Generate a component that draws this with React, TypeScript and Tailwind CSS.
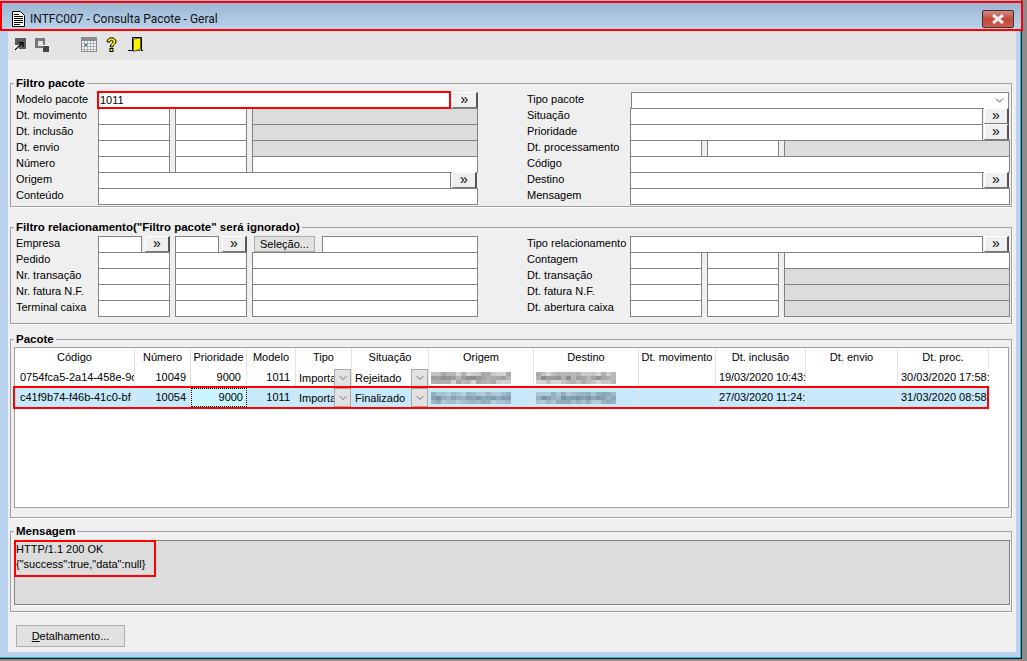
import type { ReactNode } from 'react'
import { ChevronDown } from 'lucide-react'

const Box = ({ w, gray, children }: { w: string; gray?: boolean; children?: ReactNode }) => (
  <div
    className={`h-[17px] shrink-0 overflow-hidden whitespace-nowrap border border-[#828282] pl-[2px] leading-[15px] ${w} ${
      gray ? 'bg-[#dcdcdc]' : 'bg-white'
    }`}
  >
    {children}
  </div>
)

const Dots = ({ w = 'w-[25px]' }: { w?: string }) => (
  <div className={`flex h-[16px] shrink-0 items-center justify-center border-t border-l border-t-white border-l-white border-r-2 border-b border-r-[#555] border-b-[#777] bg-[#efefef] pb-[2px] text-[14px] leading-none ${w}`}>
    »
  </div>
)

const Row = ({ label, right, children }: { label: string; right?: boolean; children?: ReactNode }) => (
  <div className="flex h-4">
    <div className={`shrink-0 leading-[15px] ${right ? 'w-[103px]' : 'w-[82px]'}`}>{label}</div>
    {children}
  </div>
)

const Triple = ({ gray }: { gray?: boolean }) => (
  <div className="flex gap-[5px]">
    <Box w="w-[72px]" />
    <Box w="w-[72px]" />
    <Box w="w-[226px]" gray={gray} />
  </div>
)

const Lookup = ({ w, children }: { w: string; children?: ReactNode }) => (
  <div className="flex gap-[1px]">
    <Box w={w}>{children}</Box>
    <Dots />
  </div>
)

const Group = ({ title, className, children }: { title: string; className: string; children: ReactNode }) => (
  <div className={`relative ml-[2px] w-[1002px] border border-[#a0a0a0] shadow-[1px_1px_0_#fff] ${className}`}>
    <div className="absolute -top-[8px] left-[3px] bg-[#efefef] px-[2px] text-[11.5px] font-bold leading-[14px]">{title}</div>
    {children}
  </div>
)

const Blur = ({ seed, tint, w }: { seed: number; tint: boolean; w: number }) => {
  const cells = []
  for (let y = 0; y < 3; y++) {
    for (let x = 0; x < Math.floor(w / 5); x++) {
      const n = Math.abs(Math.sin(seed + x * 12.9 + y * 78.2) * 43758.5) % 1
      const edge = y === 1 ? 0 : 0.35
      const v = Math.min(1, n * 0.55 + edge)
      const c = tint
        ? `rgb(${115 + v * 75},${145 + v * 70},${160 + v * 70})`
        : `rgb(${135 + v * 90},${135 + v * 90},${135 + v * 90})`
      cells.push(<rect key={`${x}-${y}`} x={x * 5} y={y * 4} width={5} height={4} fill={c} />)
    }
  }
  return (
    <svg width={w} height={12} className="block">
      {cells}
    </svg>
  )
}

const COLS = 'grid grid-cols-[120px_56px_56px_49px_56px_77px_105px_105px_77px_90px_92px_91px]'
const CELL = 'overflow-hidden whitespace-nowrap border-r border-[#e3e3e3]'

const Combo = ({ text }: { text: string }) => (
  <div className={`${CELL} flex items-center pl-[3px]`}>
    <span className="flex-1 overflow-hidden pt-[1px]">{text}</span>
    <span className="flex h-[19px] w-[17px] shrink-0 items-center justify-center border border-[#a8a8a8] bg-[#e1e1e1]">
      <ChevronDown size={12} strokeWidth={1.5} color="#444" />
    </span>
  </div>
)

const DataRow = ({ selected, code, num, situ, inc, proc }: { selected?: boolean; code: string; num: string; situ: string; inc: string; proc: string }) => (
  <div className={`${COLS} ${selected ? 'h-[19px] w-[972px] overflow-hidden bg-[#c6eafb] outline-2 outline-[#f00]' : 'h-5 w-[974px]'}`}>
    <div className={`${CELL} pl-[5px] leading-[19px]`}>{code}</div>
    <div className={`${CELL} pr-[4px] text-right leading-[19px]`}>{num}</div>
    {selected ? (
      <div className="overflow-hidden border border-dotted border-black bg-[#c8f5ff] pr-[3px] text-right leading-[17px]">9000</div>
    ) : (
      <div className={`${CELL} pr-[5px] text-right leading-[19px]`}>9000</div>
    )}
    <div className={`${CELL} pr-[5px] text-right leading-[19px]`}>1011</div>
    <Combo text="Importa" />
    <Combo text={situ} />
    <div className={`${CELL} flex items-center pl-[2px]`}>
      <Blur seed={selected ? 3 : 1} tint={!!selected} w={84} />
    </div>
    <div className={`${CELL} flex items-center pl-[2px]`}>
      <Blur seed={selected ? 7 : 5} tint={!!selected} w={84} />
    </div>
    <div className={CELL} />
    <div className={`${CELL} pl-[3px] leading-[19px] tracking-[-0.1px]`}>{inc}</div>
    <div className={CELL} />
    <div className="overflow-hidden whitespace-nowrap pl-[3px] leading-[19px]">{proc}</div>
  </div>
)

const HEADERS = ['Código', 'Número', 'Prioridade', 'Modelo', 'Tipo', 'Situação', 'Origem', 'Destino', 'Dt. movimento', 'Dt. inclusão', 'Dt. envio', 'Dt. proc.']

export default function App() {
  return (
    <div className="h-[661px] w-[1027px] overflow-hidden bg-[#8c8c8c] font-['Liberation_Sans',sans-serif] text-[11px] text-black">
      <div className="flex h-[659px] w-[1022px] flex-col border-r border-b border-[#1a1a1a] bg-[#9db6d3] pt-px">
        {/* title bar */}
        <div className="flex h-[30px] w-[1023px] shrink-0 items-center border-2 border-[#f00] bg-gradient-to-b from-[#9cb5d2] to-[#bbd4ed] pl-[10px] pt-[5px]">
          <svg width="13" height="16" viewBox="0 0 13 16" className="shrink-0">
            <path d="M.5.5h8l4 4v11H.5z" fill="#fff" stroke="#000" />
            <path d="M2 3.5h5M2 5.5h9M2 7.5h9M2 9.5h9M2 11.5h9M2 13.5h6" stroke="#000" />
          </svg>
          <span className="ml-[5px] font-['Roboto',sans-serif] text-[12px] text-[#111]">INTFC007 - Consulta Pacote - Geral</span>
          <div className="ml-auto mr-[7px] flex h-[18px] w-[32px] items-center justify-center rounded-[2px] border border-[#4a2a2a] bg-gradient-to-b from-[#d08a80] via-[#c0473a] to-[#c8604f]">
            <svg width="14" height="10" viewBox="0 0 14 10">
              <path d="M2 1l10 8M12 1L2 9" stroke="#eee" strokeWidth="3" />
            </svg>
          </div>
        </div>

        {/* window frame */}
        <div className="flex min-h-0 flex-1 flex-col border-r border-b border-[#2fb4d8] bg-[#b9d3ee] pl-[8px] pr-[4px] pb-[5px]">
          {/* toolbar */}
          <div className="flex h-[29px] shrink-0 items-center bg-[#e4e4e4] pb-[2px] pl-[6px]">
            <svg width="12" height="13" viewBox="0 0 12 13" className="shrink-0">
              <rect x="1" y="0" width="11" height="11" fill="#5a5a5a" />
              <rect x="0" y="7" width="5" height="6" fill="#fff" />
              <path d="M1 12l7-7M4.5 4.5H9V9" stroke="#000" strokeWidth="1.2" fill="none" />
            </svg>
            <svg width="15" height="14" viewBox="0 0 15 14" className="ml-[9px] shrink-0">
              <rect x="0" y="0" width="10" height="10" fill="#777" />
              <rect x="3" y="3" width="5" height="5" fill="#e4e4e4" />
              <rect x="8" y="8" width="6" height="6" fill="#444" />
              <rect x="7" y="7" width="7" height="1" fill="#fff" />
            </svg>
            <svg width="16" height="15" viewBox="0 0 16 15" className="ml-[31px] shrink-0">
              <rect width="16" height="15" fill="#8a8a8a" />
              <rect x="1" y="4" width="14" height="10" fill="#f4f4f4" />
              <path d="M3.5 4v10M6.5 4v10M9.5 4v10M12.5 4v10M1 6.5h14M1 9.5h14M1 12.5h14" stroke="#b0b0b0" />
              <rect x="4" y="7" width="2" height="2" fill="#2a7fb8" />
            </svg>
            <svg width="11" height="15" viewBox="0 0 11 15" className="ml-[9px] shrink-0">
              <path d="M1 5C1 2.5 3.2.7 5.5.7S10 2.5 10 4.8c0 2.4-3 2.7-3 5H4.2c0-3 2.8-3.4 2.8-5 0-.9-.6-1.5-1.5-1.5S4 3.9 4 5z" fill="#ffe600" stroke="#000" />
              <rect x="4" y="11.5" width="3" height="3" fill="#ffe600" stroke="#000" />
            </svg>
            <svg width="15" height="15" viewBox="0 0 15 15" className="ml-[11px] shrink-0">
              <path d="M0 13.5h15" stroke="#000" />
              <path d="M4.5 13.5V.5h9v13" fill="#e4e4e4" stroke="#000" />
              <path d="M5.5 2L12.5 1v11L5.5 14.5z" fill="#fff000" stroke="#000" strokeWidth=".6" />
            </svg>
          </div>

          {/* content */}
          <div className="flex min-h-0 flex-1 flex-col bg-[#efefef]">
            <Group title="Filtro pacote" className="mt-[23px] h-[124px]">
              <div className="flex gap-[49px] pl-[5px] pt-[8px]">
                <div className="w-[462px]">
                  <Row label="Modelo pacote">
                    <div className="relative z-10 -ml-[1px] -mt-[1px] flex items-start gap-[1px]">
                      <div className="h-[18px] w-[354px] shrink-0 border-2 border-[#f00] bg-white pl-[1px] leading-[15px]">1011</div>
                      <div className="mt-px"><Dots w="w-[26px]" /></div>
                    </div>
                  </Row>
                  <Row label="Dt. movimento"><Triple gray /></Row>
                  <Row label="Dt. inclusão"><Triple gray /></Row>
                  <Row label="Dt. envio"><Triple gray /></Row>
                  <Row label="Número"><Triple /></Row>
                  <Row label="Origem"><Lookup w="w-[353px]" /></Row>
                  <Row label="Conteúdo"><Box w="w-[380px]" /></Row>
                </div>
                <div className="w-[483px]">
                  <Row label="Tipo pacote" right>
                    <div className="ml-px flex h-[17px] w-[378px] items-center justify-end border border-[#828282] bg-white pr-[2px]">
                      <ChevronDown size={13} strokeWidth={1.5} color="#333" />
                    </div>
                  </Row>
                  <Row label="Situação" right><Lookup w="w-[353px]" /></Row>
                  <Row label="Prioridade" right><Lookup w="w-[353px]" /></Row>
                  <Row label="Dt. processamento" right><Triple gray /></Row>
                  <Row label="Código" right><Box w="w-[380px]" /></Row>
                  <Row label="Destino" right><Lookup w="w-[353px]" /></Row>
                  <Row label="Mensagem" right><Box w="w-[380px]" /></Row>
                </div>
              </div>
            </Group>

            <Group title={'Filtro relacionamento("Filtro pacote" será ignorado)'} className="mt-[20px] h-[97px]">
              <div className="flex gap-[49px] pl-[5px] pt-[8px]">
                <div className="w-[462px]">
                  <Row label="Empresa">
                    <div className="flex">
                      <Box w="w-[44px]" />
                      <Dots w="w-[25px] ml-[3px]" />
                      <Box w="w-[44px] ml-[5px]" />
                      <Dots w="w-[25px] ml-[3px]" />
                      <div className="ml-[7px] flex h-[16px] w-[61px] shrink-0 items-center justify-center border border-[#adadad] bg-[#e1e1e1]">Seleção...</div>
                      <Box w="w-[156px] ml-[7px]" />
                    </div>
                  </Row>
                  <Row label="Pedido"><Triple /></Row>
                  <Row label="Nr. transação"><Triple /></Row>
                  <Row label="Nr. fatura N.F."><Triple /></Row>
                  <Row label="Terminal caixa"><Triple /></Row>
                </div>
                <div className="w-[483px]">
                  <Row label="Tipo relacionamento" right><Lookup w="w-[353px]" /></Row>
                  <Row label="Contagem" right><Triple /></Row>
                  <Row label="Dt. transação" right><Triple gray /></Row>
                  <Row label="Dt. fatura N.F." right><Triple gray /></Row>
                  <Row label="Dt. abertura caixa" right><Triple gray /></Row>
                </div>
              </div>
            </Group>

            <Group title="Pacote" className="mt-[15px] h-[179px] pl-[3px] pt-[7px]">
              <div className="h-[161px] w-[995px] border border-[#a0a0a0] bg-white">
                <div className={`${COLS} h-[20px] w-[974px]`}>
                  {HEADERS.map((h) => (
                    <div key={h} className={`${CELL} text-center leading-[19px]`}>{h}</div>
                  ))}
                </div>
                <DataRow code="0754fca5-2a14-458e-9c" num="10049" situ="Rejeitado" inc="19/03/2020 10:43:" proc="30/03/2020 17:58:" />
                <DataRow selected code="c41f9b74-f46b-41c0-bf" num="10054" situ="Finalizado" inc="27/03/2020 11:24:" proc="31/03/2020 08:58:" />
              </div>
            </Group>

            <Group title="Mensagem" className="mt-[13px] h-[81px] pl-[3px] pt-[8px]">
              <div className="h-[65px] w-[996px] border border-[#828282] bg-[#dcdcdc] shadow-[1px_1px_0_#fff]">
                <div className="-ml-[1px] -mt-[1px] h-[37px] w-[142px] border-2 border-[#f00] leading-[15px]">
                  <div>HTTP/1.1 200 OK</div>
                  <div>{'{"success":true,"data":null}'}</div>
                </div>
              </div>
            </Group>

            <div className="ml-[8px] mt-[13px] flex h-[22px] w-[109px] items-center justify-center border border-[#adadad] bg-[#e1e1e1]">
              <span><span className="underline">D</span>etalhamento...</span>
            </div>
          </div>
        </div>
      </div>
    </div>
  )
}
